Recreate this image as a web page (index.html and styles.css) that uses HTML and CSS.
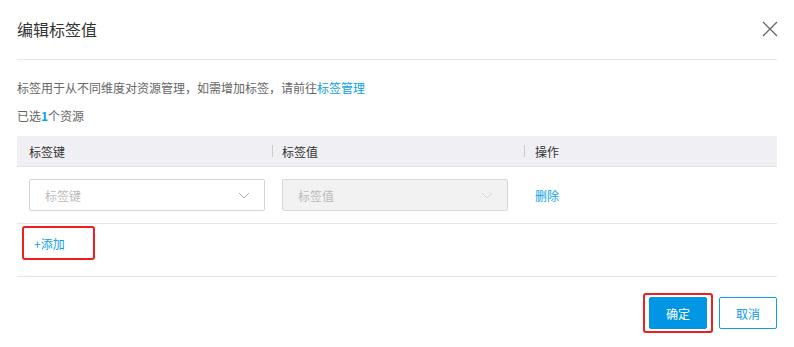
FILE: index.html
```html
<!DOCTYPE html>
<html lang="zh-CN">
<head>
<meta charset="utf-8">
<title>编辑标签值</title>
<link rel="stylesheet" href="styles.css">
</head>
<body>
<div class="dialog">
  <div class="dlg-header">
    <span class="dlg-title">编辑标签值</span>
    <svg class="close" width="16" height="16" viewBox="0 0 16 16"><path d="M1 1L15 15M15 1L1 15" stroke="#666" stroke-width="1.3" fill="none"/></svg>
  </div>
  <div class="desc">标签用于从不同维度对资源管理，如需增加标签，请前往<span class="link">标签管理</span></div>
  <div class="selected">已选<span class="num">1</span>个资源</div>
  <div class="table">
    <div class="thead">
      <div class="col c1">标签键</div>
      <div class="col c2 sep">标签值</div>
      <div class="col c3 sep">操作</div>
    </div>
    <div class="trow">
      <div class="col c1">
        <div class="select">
          <span class="ph">标签键</span>
          <svg class="chev" width="12" height="7" viewBox="0 0 12 7"><path d="M1 1L6 6L11 1" stroke="#aaa" stroke-width="1" fill="none"/></svg>
        </div>
      </div>
      <div class="col c2">
        <div class="select disabled">
          <span class="ph">标签值</span>
          <svg class="chev" width="12" height="7" viewBox="0 0 12 7"><path d="M1 1L6 6L11 1" stroke="#d4d4d4" stroke-width="1" fill="none"/></svg>
        </div>
      </div>
      <div class="col c3"><span class="link">删除</span></div>
    </div>
  </div>
  <div class="add-area">
    <span class="add-mark"><span class="link">+添加</span></span>
  </div>
  <div class="footer">
    <span class="ok-mark"><button class="btn primary">确定</button></span>
    <button class="btn ghost">取消</button>
  </div>
</div>
</body>
</html>
```

FILE: styles.css
```css
* { box-sizing: border-box; }
body {
  margin: 0;
  background: #fff;
  font-family: "Noto Sans CJK SC", "Noto Sans", sans-serif;
  color: #666;
  font-size: 12px;
}
.dialog {
  width: 760px;
  margin-left: 17px;
}
.dlg-header {
  height: 60px;
  display: flex;
  align-items: center;
  justify-content: space-between;
  border-bottom: 1px solid #e6e6e6;
}
.dlg-title {
  font-size: 16px;
  color: #333;
  line-height: 20px;
  margin-top: -2px;
}
.close { margin-top: -2px; margin-right: -1px; }
.desc {
  margin-top: 20px;
  line-height: 16px;
  color: #666;
}
.link { color: #0aa0e6; cursor: pointer; }
.selected {
  margin-top: 12px;
  line-height: 16px;
  color: #666;
}
.num { color: #0aa0e6; font-weight: bold; }
.table { margin-top: 12px; }
.thead {
  display: flex;
  height: 31px;
  align-items: center;
  background: #efeff4;
  border-bottom: 1px solid #e2e2e6;
  color: #333;
}
.col { flex: none; display: flex; align-items: center; }
.c1 { width: 255px; padding-left: 12px; }
.c2 { width: 252px; }
.c3 { flex: 1; padding-left: 11px; }
.thead .c2 { padding-left: 10px; }
.sep { position: relative; }
.sep::before {
  content: "";
  position: absolute;
  left: 0;
  top: 50%;
  margin-top: -6px;
  width: 1px;
  height: 12px;
  background: #ccc;
}
.trow {
  display: flex;
  align-items: center;
  height: 57px;
  border-bottom: 1px solid #e6e6e6;
}
.trow .c2 { padding-left: 10px; }
.select {
  height: 32px;
  border: 1px solid #d4d4d4;
  border-radius: 2px;
  display: flex;
  align-items: center;
  justify-content: space-between;
  padding: 0 14px 0 15px;
  background: #fff;
}
.c1 .select { width: 236px; }
.c2 .select { width: 226px; }
.select.disabled { background: #f2f2f2; border-color: #d8d8d8; }
.ph { color: #bbb; }
.add-area {
  height: 53px;
  padding-top: 2px;
  border-bottom: 1px solid #e6e6e6;
}
.add-mark {
  display: inline-flex;
  align-items: center;
  margin-left: 5px;
  width: 73px;
  height: 34px;
  border: 2px solid #f01e1e;
  border-radius: 3px;
  padding-left: 10px;
}
.footer {
  display: flex;
  justify-content: flex-end;
  align-items: center;
  gap: 6px;
  padding-top: 16px;
}
.ok-mark {
  display: inline-flex;
  border: 2px solid #f01e1e;
  border-radius: 3px;
  padding: 2px 4px;
}
.btn {
  width: 58px;
  height: 32px;
  border-radius: 2px;
  font-family: inherit;
  font-size: 12px;
  padding: 0;
  cursor: pointer;
}
.primary {
  background: #0096e3;
  border: 1px solid #0096e3;
  color: #fff;
}
.ghost {
  background: #fff;
  border: 1px solid #0aa0e6;
  color: #0a9ae0;
}
```
